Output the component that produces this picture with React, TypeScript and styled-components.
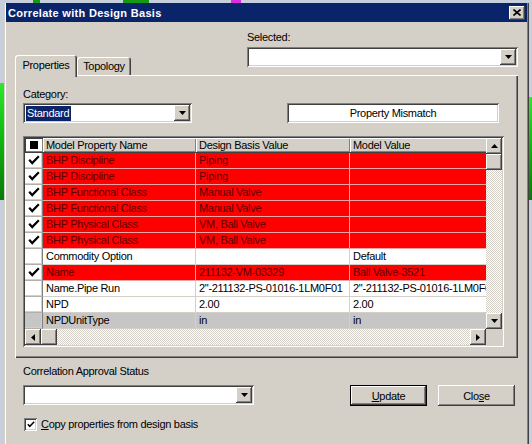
import React from 'react';
import styled, { createGlobalStyle, css } from 'styled-components';

const GlobalStyle = createGlobalStyle`
  html, body {
    margin: 0;
    padding: 0;
  }
  body {
    width: 532px;
    height: 444px;
    overflow: hidden;
    background: #c8cfdc;
    font-family: "Liberation Sans", Arial, sans-serif;
    font-size: 11px;
    letter-spacing: -0.3px;
    color: #000;
  }
  * {
    box-sizing: border-box;
  }
`;

const raised = css`
  background: #d4d0c8;
  box-shadow: inset -1px -1px #404040, inset 1px 1px #fff, inset -2px -2px #808080, inset 2px 2px #d4d0c8;
`;

const sunken = css`
  box-shadow: inset 1px 1px #808080, inset -1px -1px #fff, inset 2px 2px #404040, inset -2px -2px #d4d0c8;
`;

const checker = css`
  background: repeating-conic-gradient(#fff 0% 25%, #d4d0c8 0% 50%) 0 0 / 2px 2px;
`;

const Page = styled.div`
  display: flex;
  flex-direction: column;
  height: 444px;
`;

const TopStrip = styled.div`
  display: flex;
  height: 3px;
  flex: none;
`;

const StripBit = styled.div<{ $w: number; $c?: string }>`
  width: ${({ $w }) => $w}px;
  flex: ${({ $w }) => ($w === 0 ? 1 : 'none')};
  background: ${({ $c }) => $c || '#c8cfdc'};
`;

const Middle = styled.div`
  display: flex;
  flex: 1;
  min-height: 0;
`;

const Gutter = styled.div<{ $w: number }>`
  width: ${({ $w }) => $w}px;
  flex: none;
  display: flex;
  flex-direction: column;
`;

const GreenBand = styled.div<{ $top: number; $h: number }>`
  flex: none;
  margin-top: ${({ $top }) => $top}px;
  height: ${({ $h }) => $h}px;
  background: linear-gradient(180deg, #2ee82e 0%, #12c012 40%, #087a08 100%);
`;

const Window = styled.div`
  flex: 1;
  display: flex;
  flex-direction: column;
  padding: 0 2px;
  background: #d4d0c8;
  box-shadow: inset 1px 0 #d4d0c8, inset 2px 0 #fff, inset -1px 0 #404040, inset -2px 0 #808080;
`;

const TitleBar = styled.div`
  height: 19px;
  flex: none;
  display: flex;
  align-items: center;
  justify-content: space-between;
  padding: 0 2px;
  background: #0a246a;
`;

const Title = styled.span`
  color: #fff;
  font-weight: bold;
  font-size: 11px;
  letter-spacing: 0.3px;
`;

const CloseButton = styled.div`
  ${raised};
  width: 16px;
  height: 14px;
  display: flex;
  align-items: center;
  justify-content: center;
  padding-bottom: 1px;
`;

const Body = styled.div`
  display: flex;
  flex-direction: column;
  padding: 0 9px;
`;

const TopRow = styled.div`
  display: flex;
  justify-content: space-between;
  align-items: flex-end;
  padding-top: 9px;
`;

const Tabs = styled.div`
  display: flex;
  align-items: flex-end;
`;

const Tab = styled.div<{ $w: number; $active?: boolean }>`
  position: relative;
  z-index: ${({ $active }) => ($active ? 1 : 0)};
  width: ${({ $w }) => $w}px;
  height: ${({ $active }) => ($active ? 22 : 18)}px;
  margin-bottom: ${({ $active }) => ($active ? -2 : 0)}px;
  padding-bottom: ${({ $active }) => ($active ? 2 : 0)}px;
  display: flex;
  align-items: center;
  justify-content: center;
  background: #d4d0c8;
  border-radius: 3px 3px 0 0;
  box-shadow: inset 1px 1px #fff, inset -1px 0 #404040, inset -2px 0 #808080;
`;

const FieldBlock = styled.div<{ $w: number; $gap: number; $mb?: number }>`
  width: ${({ $w }) => $w}px;
  display: flex;
  flex-direction: column;
  gap: ${({ $gap }) => $gap}px;
  margin-bottom: ${({ $mb }) => $mb || 0}px;
`;

const FieldLabel = styled.div`
  line-height: 13px;
  white-space: nowrap;
`;

const Combo = styled.div<{ $w?: number }>`
  ${sunken};
  width: ${({ $w }) => ($w ? `${$w}px` : '100%')};
  height: 20px;
  padding: 2px;
  display: flex;
  background: #fff;
`;

const ComboField = styled.div`
  flex: 1;
  display: flex;
  align-items: center;
  padding-left: 1px;
`;

const Highlight = styled.span`
  background: #0a246a;
  color: #fff;
  line-height: 15px;
  padding: 0 2px 0 1px;
`;

const ArrowButton = styled.div<{ $h?: number }>`
  ${raised};
  width: 16px;
  height: ${({ $h }) => $h || 16}px;
  flex: none;
  display: flex;
  align-items: center;
  justify-content: center;
`;

const Panel = styled.div`
  background: #d4d0c8;
  box-shadow: inset 1px 1px #fff, inset -1px -1px #404040, inset -2px -2px #808080;
  padding: 13px 14px 11px 8px;
`;

const CategoryRow = styled.div`
  display: flex;
  justify-content: space-between;
  align-items: flex-end;
`;

const MismatchBox = styled.div`
  ${sunken};
  width: 212px;
  height: 20px;
  margin-right: 5px;
  display: flex;
  align-items: center;
  justify-content: center;
  background: #fff;
`;

const GridFrame = styled.div`
  ${sunken};
  margin-top: 13px;
  width: 481px;
  padding: 2px;
  display: flex;
  flex-direction: column;
  background: #fff;
`;

const GridMain = styled.div`
  display: flex;
  height: 191px;
`;

const Table = styled.div`
  width: 461px;
  overflow: hidden;
  display: flex;
  flex-direction: column;
`;

const GridRow = styled.div<{ $h: number }>`
  display: grid;
  grid-template-columns: 18px 153px 154px 220px;
  height: ${({ $h }) => $h}px;
  flex: none;
`;

const HeaderCell = styled.div`
  background: #d4d0c8;
  box-shadow: inset 1px 1px #fff, inset -1px -1px #808080;
  border-bottom: 1px solid #404040;
  line-height: 14px;
  padding-left: 3px;
  white-space: nowrap;
  overflow: hidden;
`;

const HeaderCheck = styled.div`
  background: #fff;
  box-shadow: inset 1px 1px #404040, inset -1px -1px #808080;
  border-bottom: 1px solid #404040;
  display: flex;
  align-items: center;
  justify-content: center;
`;

const Square = styled.div`
  width: 8px;
  height: 8px;
  background: #000;
`;

type Kind = 'red' | 'white' | 'gray';

const rowBg: Record<Kind, string> = { red: '#ff0000', white: '#fff', gray: '#c6c6c6' };
const rowLine: Record<Kind, string> = { red: '#f0a4a4', white: '#d4d0c8', gray: '#d4d0c8' };

const Cell = styled.div<{ $kind: Kind }>`
  background: ${({ $kind }) => rowBg[$kind]};
  color: ${({ $kind }) => ($kind === 'red' ? '#5c0000' : '#000')};
  border-right: 1px solid ${({ $kind }) => rowLine[$kind]};
  border-bottom: 1px solid ${({ $kind }) => rowLine[$kind]};
  line-height: 15px;
  padding-left: 3px;
  white-space: nowrap;
  overflow: hidden;
`;

const CheckCell = styled.div<{ $kind: Kind }>`
  background: ${({ $kind }) => ($kind === 'gray' ? '#c6c6c6' : '#fff')};
  border-right: 1px solid #808080;
  border-bottom: 1px solid #b4b0a8;
  box-shadow: inset -1px -1px #d4d0c8;
  display: flex;
  align-items: center;
  justify-content: center;
`;

const VScroll = styled.div`
  ${checker};
  width: 16px;
  display: flex;
  flex-direction: column;
`;

const Track = styled.div`
  flex: 1;
`;

const HScrollRow = styled.div`
  display: flex;
  height: 16px;
`;

const HScroll = styled.div`
  ${checker};
  flex: 1;
  display: flex;
`;

const Corner = styled.div`
  width: 16px;
  background: #d4d0c8;
`;

const BottomRow = styled.div`
  display: flex;
  justify-content: space-between;
  padding: 7px 3px 0 8px;
`;

const BottomLeft = styled.div`
  display: flex;
  flex-direction: column;
`;

const CheckRow = styled.div`
  display: flex;
  align-items: center;
  margin-top: 13px;
  padding-left: 1px;
`;

const CheckBox = styled.div`
  ${sunken};
  width: 13px;
  height: 13px;
  background: #fff;
  display: flex;
  align-items: center;
  justify-content: center;
`;

const CheckLabel = styled.span`
  margin-left: 4px;
  line-height: 13px;
`;

const Buttons = styled.div`
  display: flex;
  gap: 11px;
  margin-top: 20px;
`;

const Button = styled.div<{ $default?: boolean }>`
  width: 77px;
  height: 21px;
  display: flex;
  align-items: center;
  justify-content: center;
  background: #d4d0c8;
  box-shadow: ${({ $default }) =>
    $default
      ? 'inset 0 0 0 1px #000, inset -2px -2px #404040, inset 2px 2px #fff, inset -3px -3px #808080'
      : 'inset -1px -1px #404040, inset 1px 1px #fff, inset -2px -2px #808080'};
`;

const Arrow = ({ dir }: { dir: 'up' | 'down' | 'left' | 'right' }) => {
  const pts = {
    down: '0,0 7,0 3.5,4',
    up: '0,4 7,4 3.5,0',
    right: '0,0 4,3.5 0,7',
    left: '4,0 0,3.5 4,7',
  }[dir];
  const vertical = dir === 'up' || dir === 'down';
  return (
    <svg width={vertical ? 7 : 4} height={vertical ? 4 : 7} viewBox={vertical ? '0 0 7 4' : '0 0 4 7'}>
      <polygon points={pts} fill="#000" />
    </svg>
  );
};

const Tick = ({ size = 12 }: { size?: number }) => (
  <svg width={size} height={size * 0.84} viewBox="0 0 12 10">
    <polyline points="1.2,4.8 4.2,8 10.8,1.2" fill="none" stroke="#000" strokeWidth="2.2" />
  </svg>
);

type Row = { checked: boolean; kind: Kind; name: string; basis: string; model: string };

const rows: Row[] = [
  { checked: true, kind: 'red', name: 'BHP Discipline', basis: 'Piping', model: '' },
  { checked: true, kind: 'red', name: 'BHP Discipline', basis: 'Piping', model: '' },
  { checked: true, kind: 'red', name: 'BHP Functional Class', basis: 'Manual Valve', model: '' },
  { checked: true, kind: 'red', name: 'BHP Functional Class', basis: 'Manual Valve', model: '' },
  { checked: true, kind: 'red', name: 'BHP Physical Class', basis: 'VM, Ball Valve', model: '' },
  { checked: true, kind: 'red', name: 'BHP Physical Class', basis: 'VM, Ball Valve', model: '' },
  { checked: false, kind: 'white', name: 'Commodity Option', basis: '', model: 'Default' },
  { checked: true, kind: 'red', name: 'Name', basis: '211132-VM-03329', model: 'Ball Valve-3521' },
  {
    checked: false,
    kind: 'white',
    name: 'Name.Pipe Run',
    basis: '2"-211132-PS-01016-1LM0F01',
    model: '2"-211132-PS-01016-1LM0F01',
  },
  { checked: false, kind: 'white', name: 'NPD', basis: '2.00', model: '2.00' },
  { checked: false, kind: 'gray', name: 'NPDUnitType', basis: 'in', model: 'in' },
];

export default function App() {
  return (
    <Page>
      <GlobalStyle />
      <TopStrip>
        <StripBit $w={33} />
        <StripBit $w={7} $c="#149a14" />
        <StripBit $w={83} />
        <StripBit $w={26} $c="#149a14" />
        <StripBit $w={82} />
        <StripBit $w={10} $c="#e02ce0" />
        <StripBit $w={0} />
      </TopStrip>
      <Middle>
        <Gutter $w={4}>
          <GreenBand $top={80} $h={117} />
        </Gutter>
        <Window>
          <TitleBar>
            <Title>Correlate with Design Basis</Title>
            <CloseButton>
              <svg width="8" height="7" viewBox="0 0 8 7">
                <path d="M0.5 0.5 L7.5 6.5 M7.5 0.5 L0.5 6.5" stroke="#000" strokeWidth="1.6" />
              </svg>
            </CloseButton>
          </TitleBar>
          <Body>
            <TopRow>
              <Tabs>
                <Tab $w={62} $active>
                  Properties
                </Tab>
                <Tab $w={54}>Topology</Tab>
              </Tabs>
              <FieldBlock $w={271} $gap={3} $mb={8}>
                <FieldLabel>Selected:</FieldLabel>
                <Combo>
                  <ComboField />
                  <ArrowButton>
                    <Arrow dir="down" />
                  </ArrowButton>
                </Combo>
              </FieldBlock>
            </TopRow>
            <Panel>
              <CategoryRow>
                <FieldBlock $w={169} $gap={2}>
                  <FieldLabel>Category:</FieldLabel>
                  <Combo>
                    <ComboField>
                      <Highlight>Standard</Highlight>
                    </ComboField>
                    <ArrowButton>
                      <Arrow dir="down" />
                    </ArrowButton>
                  </Combo>
                </FieldBlock>
                <MismatchBox>Property Mismatch</MismatchBox>
              </CategoryRow>
              <GridFrame>
                <GridMain>
                  <Table>
                    <GridRow $h={15}>
                      <HeaderCheck>
                        <Square />
                      </HeaderCheck>
                      <HeaderCell>Model Property Name</HeaderCell>
                      <HeaderCell>Design Basis Value</HeaderCell>
                      <HeaderCell>Model Value</HeaderCell>
                    </GridRow>
                    {rows.map((r, i) => (
                      <GridRow $h={16} key={i}>
                        <CheckCell $kind={r.kind}>{r.checked && <Tick />}</CheckCell>
                        <Cell $kind={r.kind}>{r.name}</Cell>
                        <Cell $kind={r.kind}>{r.basis}</Cell>
                        <Cell $kind={r.kind}>{r.model}</Cell>
                      </GridRow>
                    ))}
                  </Table>
                  <VScroll>
                    <ArrowButton>
                      <Arrow dir="up" />
                    </ArrowButton>
                    <ArrowButton />
                    <Track />
                    <ArrowButton>
                      <Arrow dir="down" />
                    </ArrowButton>
                  </VScroll>
                </GridMain>
                <HScrollRow>
                  <HScroll>
                    <ArrowButton>
                      <Arrow dir="left" />
                    </ArrowButton>
                    <ArrowButton />
                    <Track />
                    <ArrowButton>
                      <Arrow dir="right" />
                    </ArrowButton>
                  </HScroll>
                  <Corner />
                </HScrollRow>
              </GridFrame>
            </Panel>
            <BottomRow>
              <BottomLeft>
                <FieldBlock $w={231} $gap={7}>
                  <FieldLabel>Correlation Approval Status</FieldLabel>
                  <Combo>
                    <ComboField />
                    <ArrowButton>
                      <Arrow dir="down" />
                    </ArrowButton>
                  </Combo>
                </FieldBlock>
                <CheckRow>
                  <CheckBox>
                    <Tick size={8} />
                  </CheckBox>
                  <CheckLabel>
                    <u>C</u>opy properties from design basis
                  </CheckLabel>
                </CheckRow>
              </BottomLeft>
              <Buttons>
                <Button $default>
                  <span>
                    <u>U</u>pdate
                  </span>
                </Button>
                <Button>
                  <span>
                    Clo<u>s</u>e
                  </span>
                </Button>
              </Buttons>
            </BottomRow>
          </Body>
        </Window>
        <Gutter $w={3}>
          <GreenBand $top={94} $h={103} />
        </Gutter>
      </Middle>
    </Page>
  );
}
